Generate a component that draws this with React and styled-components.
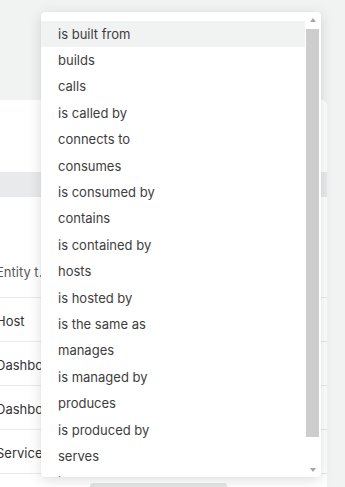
import React from "react";
import styled, { createGlobalStyle } from "styled-components";

const Global = createGlobalStyle`
  html, body { margin: 0; padding: 0; background: #f1f2f2; }
  body { font-family: Inter, "Noto Sans", sans-serif; overflow: hidden; }
  #root { height: 487px; position: relative; overflow: hidden; }
`;

const Page = styled.div`
  height: 487px;
  padding-top: 100px;
  box-sizing: border-box;
  overflow: hidden;
`;

const Card = styled.div`
  margin-left: -20px;
  width: 347px;
  height: 420px;
  background: #fff;
  border-radius: 0 6px 0 0;
  display: flex;
  flex-direction: column;
`;

const TopArea = styled.div`
  height: 72px;
`;

const Band = styled.div`
  height: 25px;
  background: #e9eaeb;
`;

const HeaderRow = styled.div`
  margin-top: 55px;
  height: 39px;
  padding: 0 0 6px 16px;
  border-bottom: 1px solid #e8e9ea;
  display: flex;
  align-items: center;
`;

const HeaderCell = styled.div`
  width: 58px;
  font-size: 13px;
  color: #595959;
  white-space: nowrap;
  overflow: hidden;
  text-overflow: ellipsis;
`;

const Row = styled.div`
  height: 41px;
  padding: 2px 0 0 16px;
  border-bottom: 1px solid #e8e9ea;
  display: flex;
  align-items: center;
  font-size: 13px;
  color: #333;
  white-space: nowrap;
`;

const BottomBar = styled.div`
  margin: 9px 0 0 110px;
  width: 137px;
  height: 10px;
  background: #e4e5e5;
  border-radius: 3px;
`;

const Dropdown = styled.div`
  position: absolute;
  left: 41px;
  top: 12px;
  width: 280px;
  height: 465px;
  background: #fff;
  border-radius: 4px;
  box-shadow: 0 3px 14px rgba(0, 0, 0, 0.13), 0 0 2px rgba(0, 0, 0, 0.05);
  display: flex;
  overflow: hidden;
`;

const List = styled.div`
  flex: 1;
  padding-top: 8.5px;
  overflow: hidden;
`;

const Item = styled.div`
  height: 26.4px;
  padding-left: 17px;
  display: flex;
  align-items: center;
  font-size: 13px;
  color: #3d3d3d;
  white-space: nowrap;
  background: ${(p) => (p.$active ? "#f1f2f2" : "transparent")};
`;

const ScrollBar = styled.div`
  width: 16px;
  display: flex;
  flex-direction: column;
`;

const ScrollButton = styled.div`
  height: 15px;
  display: flex;
  align-items: center;
  justify-content: center;
  padding-right: 1px;
`;

const Arrow = styled.div`
  width: 0;
  height: 0;
  border-left: 3.5px solid transparent;
  border-right: 3.5px solid transparent;
  ${(p) =>
    p.$down
      ? "border-top: 4px solid #a6a6a6;"
      : "border-bottom: 4px solid #a6a6a6;"}
`;

const Track = styled.div`
  flex: 1;
  padding: 2px 2px 0 1px;
`;

const Thumb = styled.div`
  height: 407.5px;
  background: #cdcdcd;
`;

const relations = [
  "is built from",
  "builds",
  "calls",
  "is called by",
  "connects to",
  "consumes",
  "is consumed by",
  "contains",
  "is contained by",
  "hosts",
  "is hosted by",
  "is the same as",
  "manages",
  "is managed by",
  "produces",
  "is produced by",
  "serves",
  "is served by",
];

const rows = ["Host", "Dashboard", "Dashboard", "Service"];

export default function App() {
  return (
    <>
      <Global />
      <Page>
        <Card>
          <TopArea />
          <Band />
          <HeaderRow>
            <HeaderCell>Entity type</HeaderCell>
          </HeaderRow>
          {rows.map((r, i) => (
            <Row key={i}>{r}</Row>
          ))}
          <BottomBar />
        </Card>
      </Page>
      <Dropdown>
        <List>
          {relations.map((r, i) => (
            <Item key={r} $active={i === 0}>
              {r}
            </Item>
          ))}
        </List>
        <ScrollBar>
          <ScrollButton>
            <Arrow />
          </ScrollButton>
          <Track>
            <Thumb />
          </Track>
          <ScrollButton>
            <Arrow $down />
          </ScrollButton>
        </ScrollBar>
      </Dropdown>
    </>
  );
}
